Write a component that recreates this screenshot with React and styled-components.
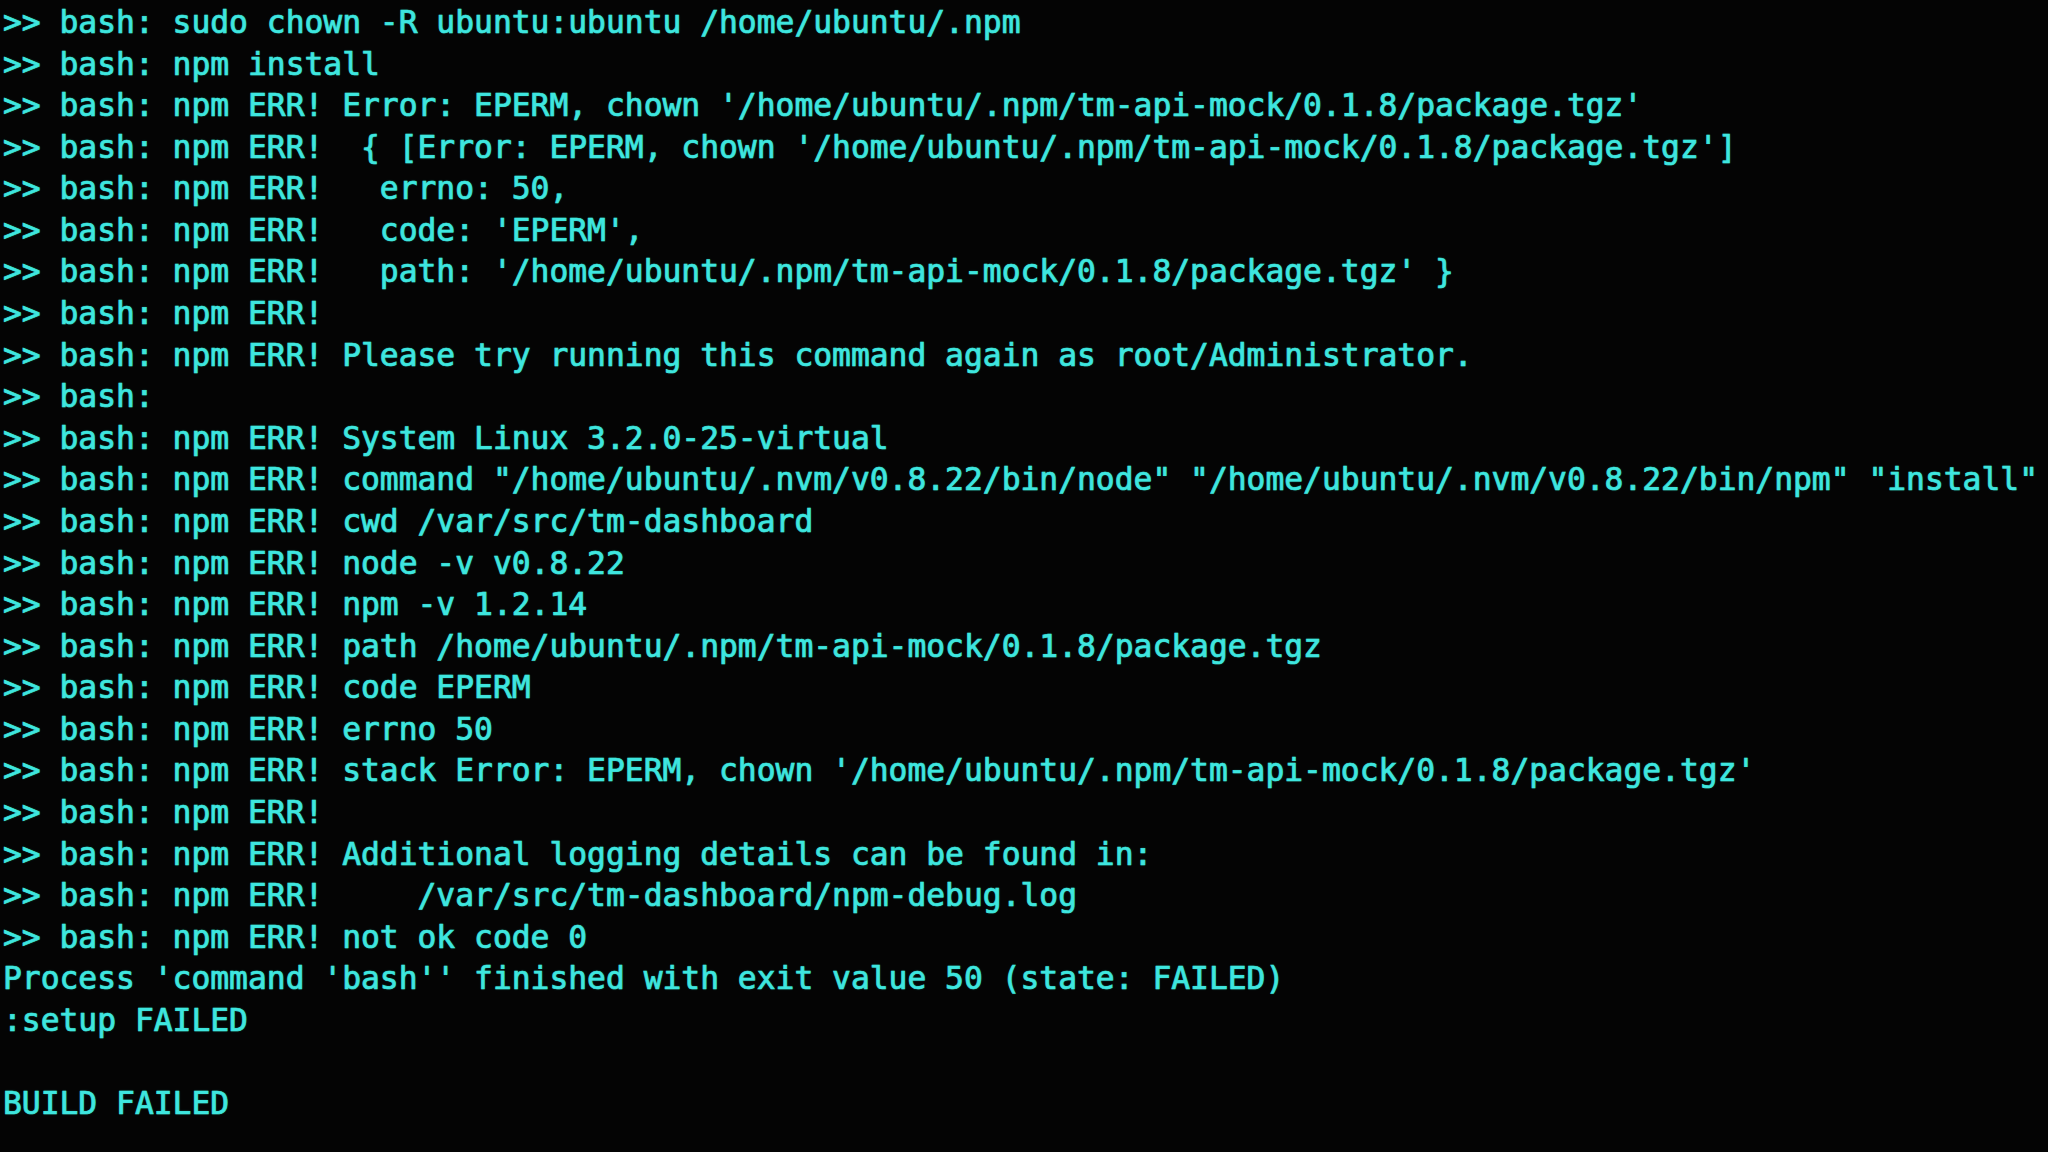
import React from "react";
import styled, { createGlobalStyle } from "styled-components";

const Global = createGlobalStyle`
  html, body {
    margin: 0;
    padding: 0;
    background: #040404;
  }
  #root {
    min-height: 100vh;
    background: #040404;
  }
`;

const Terminal = styled.div`
  width: 2048px;
  height: 1152px;
  overflow: hidden;
  box-sizing: border-box;
  background: #040404;
  padding: 2px 0 0 3px;
  display: flex;
  flex-direction: column;
`;

const Line = styled.div`
  font-family: "DejaVu Sans Mono", "Liberation Mono", monospace;
  font-size: 31.3px;
  line-height: 41.58px;
  height: 41.58px;
  flex: none;
  white-space: pre;
  color: #3ee6df;
  -webkit-text-stroke: 0.7px #3ee6df;
  text-shadow: 0 0 2px rgba(62, 230, 223, 0.45);
`;

const E = ">> bash: npm ERR!";

const lines = [
  ">> bash: sudo chown -R ubuntu:ubuntu /home/ubuntu/.npm",
  ">> bash: npm install",
  `${E} Error: EPERM, chown '/home/ubuntu/.npm/tm-api-mock/0.1.8/package.tgz'`,
  `${E}  { [Error: EPERM, chown '/home/ubuntu/.npm/tm-api-mock/0.1.8/package.tgz']`,
  `${E}   errno: 50,`,
  `${E}   code: 'EPERM',`,
  `${E}   path: '/home/ubuntu/.npm/tm-api-mock/0.1.8/package.tgz' }`,
  `${E}`,
  `${E} Please try running this command again as root/Administrator.`,
  ">> bash:",
  `${E} System Linux 3.2.0-25-virtual`,
  `${E} command "/home/ubuntu/.nvm/v0.8.22/bin/node" "/home/ubuntu/.nvm/v0.8.22/bin/npm" "install"`,
  `${E} cwd /var/src/tm-dashboard`,
  `${E} node -v v0.8.22`,
  `${E} npm -v 1.2.14`,
  `${E} path /home/ubuntu/.npm/tm-api-mock/0.1.8/package.tgz`,
  `${E} code EPERM`,
  `${E} errno 50`,
  `${E} stack Error: EPERM, chown '/home/ubuntu/.npm/tm-api-mock/0.1.8/package.tgz'`,
  `${E}`,
  `${E} Additional logging details can be found in:`,
  `${E}     /var/src/tm-dashboard/npm-debug.log`,
  `${E} not ok code 0`,
  "Process 'command 'bash'' finished with exit value 50 (state: FAILED)",
  ":setup FAILED",
  "",
  "BUILD FAILED",
];

export default function App() {
  return (
    <>
      <Global />
      <Terminal>
        {lines.map((l, i) => (
          <Line key={i}>{l}</Line>
        ))}
      </Terminal>
    </>
  );
}
